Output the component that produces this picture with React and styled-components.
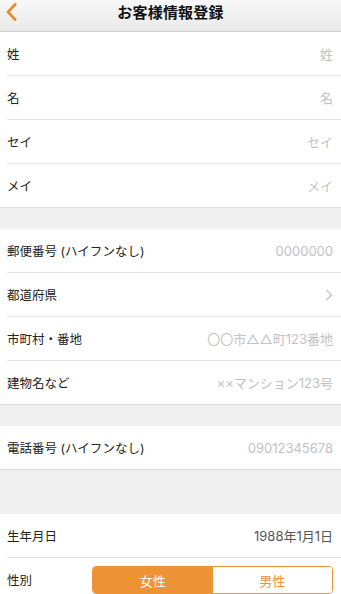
import React, { useState } from "react";
import styled, { createGlobalStyle } from "styled-components";

const Global = createGlobalStyle`
  html, body { margin: 0; padding: 0; background: #efeff0; }
  body { font-family: Inter, "Noto Sans CJK JP", sans-serif; -webkit-font-smoothing: antialiased; }
  * { box-sizing: border-box; }
`;

const Page = styled.div`
  width: 341px;
  min-height: 594px;
  background: #efeff0;
  overflow: hidden;
`;

const NavBar = styled.header`
  height: 32px;
  display: grid;
  grid-template-columns: 40px 1fr 40px;
  align-items: center;
  background: linear-gradient(#f8f8f8, #e9e9e9);
  border-bottom: 1px solid #cfcfcf;
`;

const BackButton = styled.button`
  border: 0;
  background: none;
  padding: 0 0 0 6px;
  height: 32px;
  display: flex;
  align-items: center;
  cursor: pointer;
  margin-top: -8px;
`;

const Title = styled.h1`
  margin: 0;
  margin-top: -9px;
  text-align: center;
  font-size: 15px;
  font-weight: 700;
  color: #111;
  letter-spacing: 0.2px;
`;

const Group = styled.section`
  background: #fff;
  border-bottom: 1px solid #dcdcdc;
  margin-bottom: ${(p) => p.$gap || 0}px;
`;

const Row = styled.div`
  height: ${(p) => (p.$last ? 43 : 44)}px;
  margin-left: 7px;
  padding-right: 8px;
  display: flex;
  align-items: center;
  justify-content: space-between;
  border-bottom: ${(p) => (p.$last ? "0" : "1px solid #e2e2e2")};
`;

const Label = styled.span`
  font-size: 12.5px;
  color: #222;
  white-space: nowrap;
`;

const Value = styled.span`
  font-size: 13px;
  color: ${(p) => (p.$filled ? "#555" : "#c2c2c2")};
  white-space: nowrap;
`;

const Segment = styled.div`
  display: flex;
  width: 241px;
  height: 28px;
  border: 1px solid #ee9236;
  border-radius: 4px;
  overflow: hidden;
  margin-top: 1px;
`;

const SegButton = styled.button`
  flex: 1;
  border: 0;
  margin: 0;
  font-family: inherit;
  font-size: 13px;
  background: ${(p) => (p.$active ? "#ee9236" : "#fff")};
  color: ${(p) => (p.$active ? "#fff" : "#ee9236")};
  cursor: pointer;
`;

const Chevron = () => (
  <svg width="8" height="12" viewBox="0 0 8 12">
    <path d="M1.5 1 L6.5 6 L1.5 11" fill="none" stroke="#c4c4c4" strokeWidth="1.4" />
  </svg>
);

const BackIcon = () => (
  <svg width="12" height="20" viewBox="0 0 12 20">
    <path d="M10 1.5 L2 10 L10 18.5" fill="none" stroke="#ec8a2a" strokeWidth="2.6" strokeLinejoin="miter" />
  </svg>
);

function FieldGroup({ rows, gap }) {
  return (
    <Group $gap={gap}>
      {rows.map((r, i) => (
        <Row key={r.label} $last={i === rows.length - 1}>
          <Label>{r.label}</Label>
          {r.chevron ? <Chevron /> : <Value $filled={r.filled}>{r.value}</Value>}
        </Row>
      ))}
    </Group>
  );
}

export default function App() {
  const [gender, setGender] = useState("female");
  return (
    <>
      <Global />
      <Page>
        <NavBar>
          <BackButton aria-label="戻る"><BackIcon /></BackButton>
          <Title>お客様情報登録</Title>
          <span />
        </NavBar>
        <FieldGroup
          gap={21}
          rows={[
            { label: "姓", value: "姓" },
            { label: "名", value: "名" },
            { label: "セイ", value: "セイ" },
            { label: "メイ", value: "メイ" },
          ]}
        />
        <FieldGroup
          gap={21}
          rows={[
            { label: "郵便番号 (ハイフンなし)", value: "0000000" },
            { label: "都道府県", chevron: true },
            { label: "市町村・番地", value: "〇〇市△△町123番地" },
            { label: "建物名など", value: "××マンション123号" },
          ]}
        />
        <FieldGroup gap={44} rows={[{ label: "電話番号 (ハイフンなし)", value: "09012345678" }]} />
        <Group>
          <Row>
            <Label>生年月日</Label>
            <Value $filled>1988年1月1日</Value>
          </Row>
          <Row $last>
            <Label>性別</Label>
            <Segment>
              <SegButton $active={gender === "female"} onClick={() => setGender("female")}>女性</SegButton>
              <SegButton $active={gender === "male"} onClick={() => setGender("male")}>男性</SegButton>
            </Segment>
          </Row>
        </Group>
      </Page>
    </>
  );
}
